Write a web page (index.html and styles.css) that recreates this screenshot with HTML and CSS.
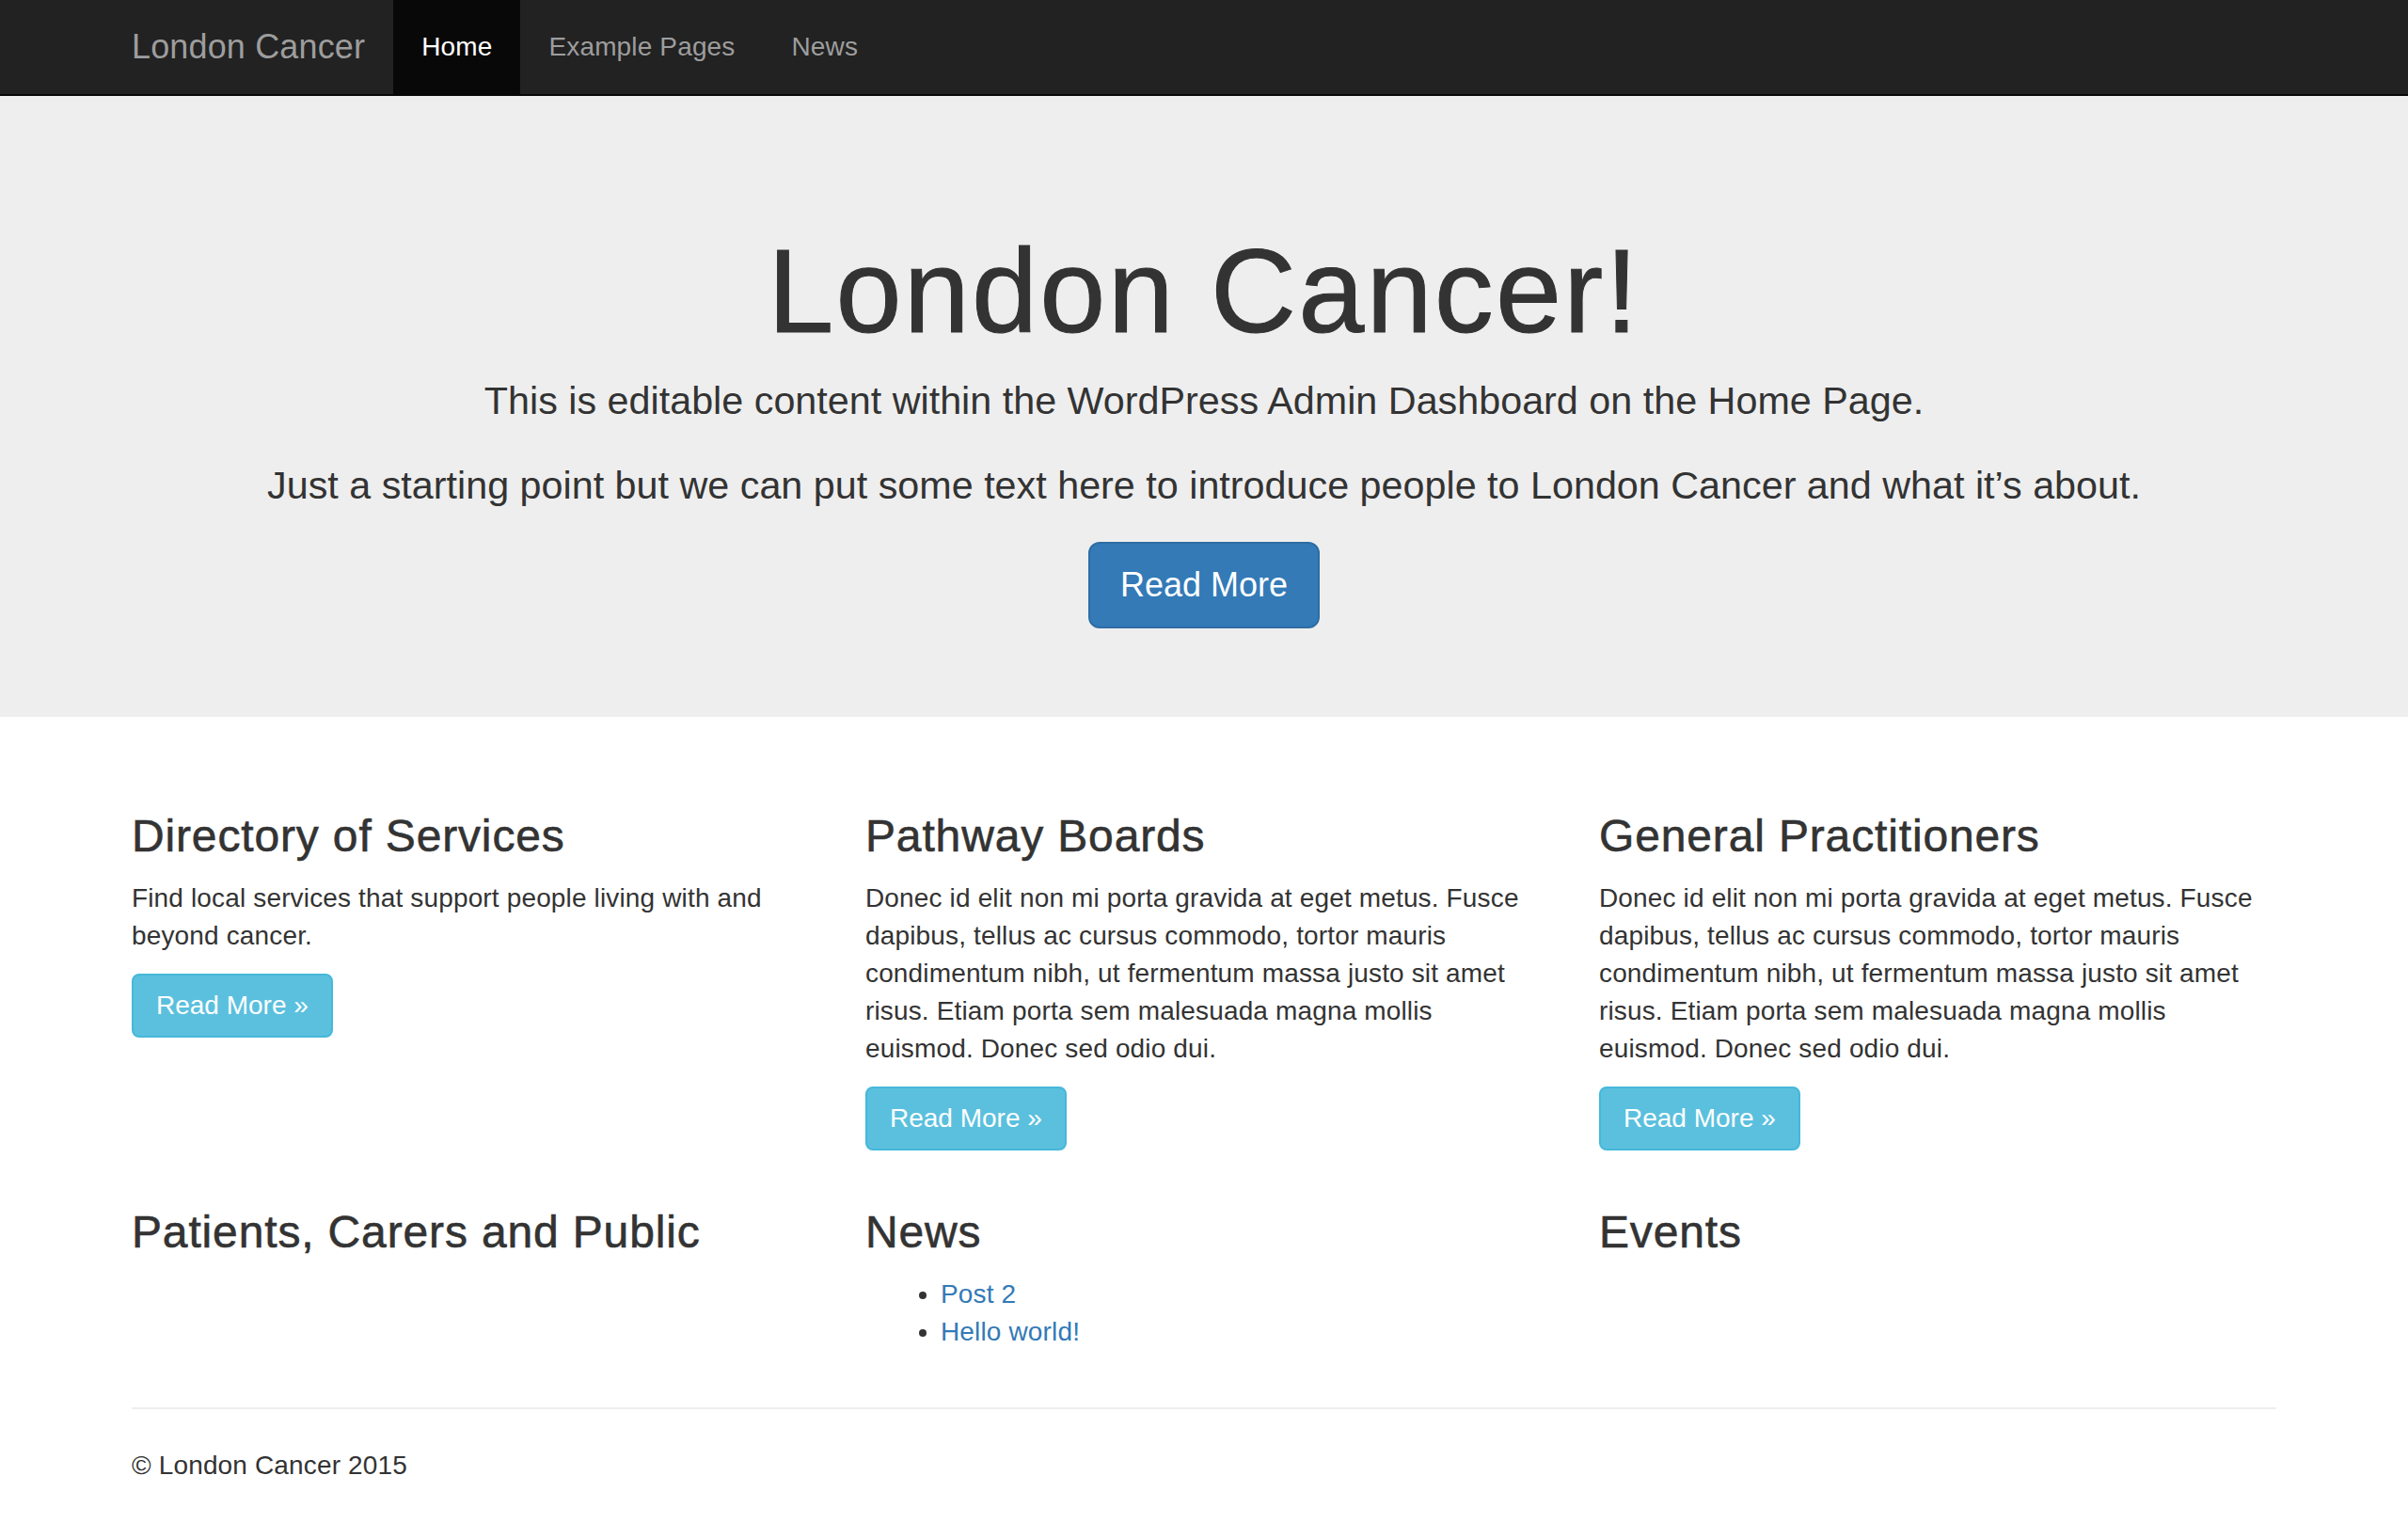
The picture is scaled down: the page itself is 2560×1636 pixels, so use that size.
FILE: index.html
```html
<!DOCTYPE html>
<html lang="en">
<head>
<meta charset="utf-8">
<title>London Cancer</title>
<link rel="stylesheet" href="styles.css">
</head>
<body>
<nav class="navbar">
  <div class="container nav-inner">
    <a class="brand" href="#">London Cancer</a>
    <ul class="nav">
      <li class="active"><a href="#">Home</a></li>
      <li><a href="#">Example Pages</a></li>
      <li><a href="#">News</a></li>
    </ul>
  </div>
</nav>
<div class="jumbotron">
  <div class="container center">
    <h1>London Cancer!</h1>
    <p>This is editable content within the WordPress Admin Dashboard on the Home Page.</p>
    <p>Just a starting point but we can put some text here to introduce people to London Cancer and what it’s about.</p>
    <p class="btn-wrap"><a class="btn btn-primary btn-lg" href="#">Read More</a></p>
  </div>
</div>
<div class="container">
  <div class="row">
    <div class="col">
      <h2>Directory of Services</h2>
      <p>Find local services that support people living with and beyond cancer.</p>
      <p><a class="btn btn-info" href="#">Read More »</a></p>
    </div>
    <div class="col">
      <h2>Pathway Boards</h2>
      <p>Donec id elit non mi porta gravida at eget metus. Fusce dapibus, tellus ac cursus commodo, tortor mauris condimentum nibh, ut fermentum massa justo sit amet risus. Etiam porta sem malesuada magna mollis euismod. Donec sed odio dui.</p>
      <p><a class="btn btn-info" href="#">Read More »</a></p>
    </div>
    <div class="col">
      <h2>General Practitioners</h2>
      <p>Donec id elit non mi porta gravida at eget metus. Fusce dapibus, tellus ac cursus commodo, tortor mauris condimentum nibh, ut fermentum massa justo sit amet risus. Etiam porta sem malesuada magna mollis euismod. Donec sed odio dui.</p>
      <p><a class="btn btn-info" href="#">Read More »</a></p>
    </div>
    <div class="col">
      <h2>Patients, Carers and Public</h2>
    </div>
    <div class="col">
      <h2>News</h2>
      <ul class="posts">
        <li><a href="#">Post 2</a></li>
        <li><a href="#">Hello world!</a></li>
      </ul>
    </div>
    <div class="col">
      <h2>Events</h2>
    </div>
  </div>
  <hr class="rule">
  <footer class="footer">
    <p>© London Cancer 2015</p>
  </footer>
</div>
</body>
</html>
```
FILE: styles.css
```css
* { box-sizing: border-box; }
html, body { margin: 0; padding: 0; }
body {
  font-family: "Liberation Sans", Arial, sans-serif;
  font-size: 28px;
  line-height: 40px;
  letter-spacing: 0.15px;
  color: #333;
  background: #fff;
}
a { text-decoration: none; color: #337ab7; }

.container {
  width: 2340px;
  margin: 0 auto;
  padding: 0 30px;
}

/* Navbar */
.navbar {
  background: #222;
  border-bottom: 2px solid #080808;
  height: 102px;
}
.nav-inner {
  display: flex;
  align-items: stretch;
  height: 100px;
  letter-spacing: 0.15px;
}
.brand {
  margin-left: -30px;
  padding: 30px;
  font-size: 36px;
  line-height: 40px;
  height: 100px;
  color: #9d9d9d;
}
.nav {
  list-style: none;
  margin: 0;
  padding: 0;
  display: flex;
}
.nav li a {
  display: block;
  padding: 30px;
  font-size: 28px;
  line-height: 40px;
  color: #9d9d9d;
}
.nav li.active a {
  background: #080808;
  color: #fff;
}

/* Jumbotron */
.jumbotron {
  background: #eee;
  padding: 103px 0 94px;
  margin-bottom: 60px;
}
.center { text-align: center; }
.jumbotron h1 {
  font-size: 126px;
  font-weight: 500;
  letter-spacing: 2.2px;
  line-height: 1.1;
  margin: 36px 0 16px;
  color: #333;
  -webkit-text-stroke: 1px #333;
}
.jumbotron p {
  font-size: 41.3px;
  letter-spacing: 0;
  line-height: 60px;
  margin: 0 0 30px;
  font-weight: 300;
}
.jumbotron .btn-wrap { margin: 0; }

.btn {
  display: inline-block;
  border: 2px solid transparent;
  font-weight: 400;
  text-align: center;
  vertical-align: middle;
}
.btn-lg {
  font-size: 36px;
  line-height: 48px;
  padding: 20px 32px;
  border-radius: 12px;
}
.btn-primary {
  background: #337ab7;
  border-color: #2e6da4;
  color: #fff;
}
.btn-info {
  background: #5bc0de;
  border-color: #46b8da;
  color: #fff;
  font-size: 28px;
  line-height: 40px;
  padding: 12px 24px;
  border-radius: 8px;
  letter-spacing: 0;
}

/* Columns */
.row {
  display: grid;
  grid-template-columns: repeat(3, 780px);
  margin: 0 -30px;
}
.col { padding: 0 30px; }
.col h2 {
  font-size: 48px;
  font-weight: 500;
  letter-spacing: 0.85px;
  line-height: 53px;
  margin: 40px 0 20px;
  color: #333;
  -webkit-text-stroke: 0.6px #333;
}
.col p { margin: 0 0 20px; }
.posts {
  margin: 0 0 20px;
  padding-left: 80px;
}

.rule {
  margin: 40px 0;
  border: 0;
  border-top: 2px solid #eee;
}
.footer p { margin: 0 0 20px; }
```
